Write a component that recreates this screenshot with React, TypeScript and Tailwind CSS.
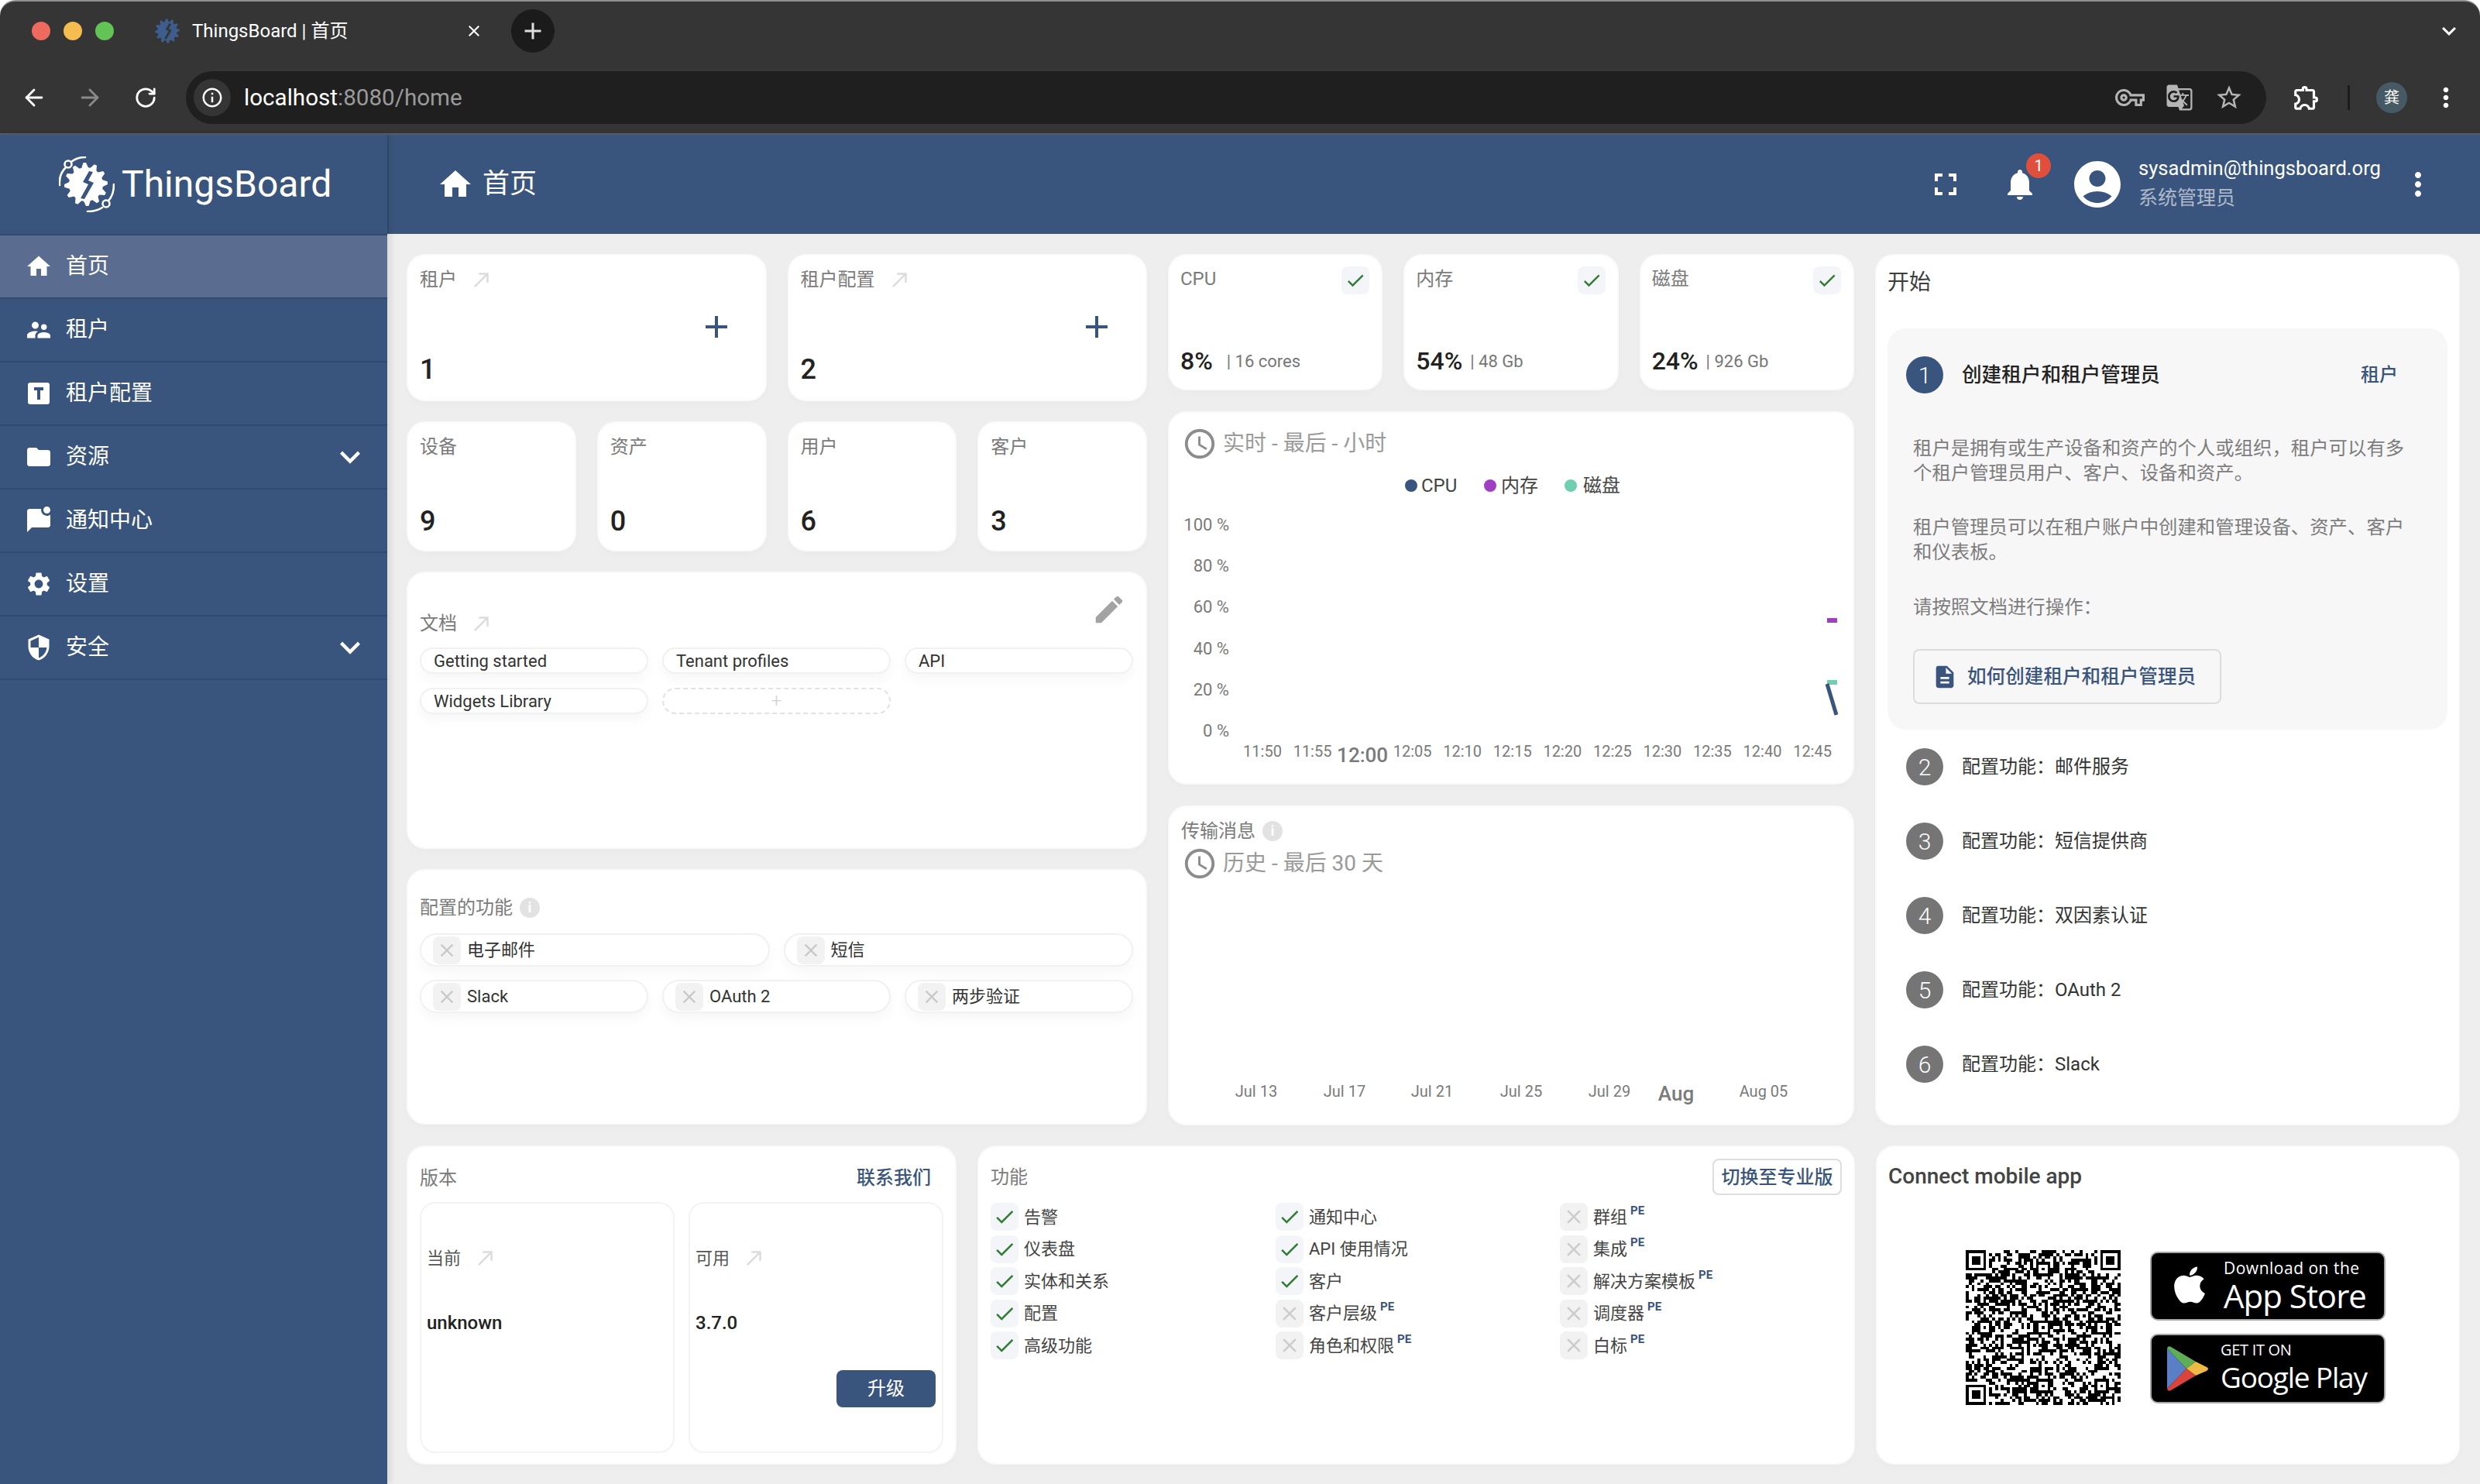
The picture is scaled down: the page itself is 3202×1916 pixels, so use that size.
import React from "react";
import {
  MdHome, MdSupervisorAccount, MdFolder, MdMarkChatUnread, MdSettings, MdSecurity, MdExpandMore,
  MdFullscreen, MdNotifications, MdAccountCircle, MdMoreVert, MdCallMade, MdAdd, MdEdit, MdCheck,
  MdClose, MdDescription, MdAccessTime, MdOutlineVpnKey, MdGTranslate, MdStarBorder,
  MdOutlineExtension, MdKeyboardArrowDown, MdInfoOutline,
} from "react-icons/md";
import { FaApple } from "react-icons/fa";
import { ArrowLeft, ArrowRight, RotateCw } from "lucide-react";

function gearPoints(cx: number, cy: number, r1: number, r2: number, teeth: number) {
  const pts: string[] = [];
  for (let i = 0; i < teeth * 4; i++) {
    const a = (i / (teeth * 4)) * Math.PI * 2 - 0.13;
    const r = i % 4 < 2 ? r1 : r2;
    pts.push(`${(cx + r * Math.cos(a)).toFixed(2)},${(cy + r * Math.sin(a)).toFixed(2)}`);
  }
  return pts.join(" ");
}

function Logo({ size, color, bg, orbit }: { size: number; color: string; bg: string; orbit: boolean }) {
  return (
    <svg width={size} height={size} viewBox={orbit ? "0 0 72 72" : "5 6 60 60"} fill="none">
      <polygon points={gearPoints(35, 36, 28, 22, 12)} fill={color} />
      <path d="M39 19 L31 33 L38 36 L28 54 L33 55 L45 34 L38 31 L44 20 Z" fill={bg} />
      {orbit && (
        <g stroke={color} strokeWidth="2.6" strokeLinecap="round">
          <circle cx="12" cy="10" r="4.5" />
          <path d="M1 37 C0 27 4 19 9 14" />
          <path d="M16 7 C21 3 27 1 34 1" />
          <circle cx="61" cy="61" r="4.5" />
          <path d="M71 36 C71 45 69 52 64 57" />
          <path d="M56 66 C50 70 44 71 37 71" />
        </g>
      )}
    </svg>
  );
}

function QRCode() {
  const n = 53;
  const cells: boolean[][] = [];
  let seed = 20240805;
  const rnd = () => {
    seed = (seed * 1664525 + 1013904223) >>> 0;
    return (seed >>> 16) / 65536;
  };
  for (let y = 0; y < n; y++) {
    const row: boolean[] = [];
    for (let x = 0; x < n; x++) row.push(rnd() > 0.5);
    cells.push(row);
  }
  const stamp = (px: number, py: number) => {
    for (let y = -1; y <= 7; y++)
      for (let x = -1; x <= 7; x++) {
        const X = px + x;
        const Y = py + y;
        if (X < 0 || Y < 0 || X >= n || Y >= n) continue;
        const ring = x === 0 || y === 0 || x === 6 || y === 6;
        const core = x >= 2 && x <= 4 && y >= 2 && y <= 4;
        const inside = x >= 0 && x <= 6 && y >= 0 && y <= 6;
        cells[Y][X] = inside && (ring || core);
      }
  };
  stamp(0, 0);
  stamp(n - 7, 0);
  stamp(0, n - 7);
  const align = (cx: number, cy: number) => {
    for (let y = -2; y <= 2; y++)
      for (let x = -2; x <= 2; x++) cells[cy + y][cx + x] = Math.max(Math.abs(x), Math.abs(y)) !== 1;
  };
  [
    [26, 6], [6, 26], [26, 26], [46, 26], [26, 46], [46, 46],
  ].forEach(([a, b]) => align(a, b));
  let d = "";
  cells.forEach((row, y) =>
    row.forEach((on, x) => {
      if (on) d += `M${x} ${y}h1v1h-1z`;
    })
  );
  return (
    <svg width={200} height={200} viewBox={`0 0 ${n} ${n}`} shapeRendering="crispEdges">
      <path d={d} fill="#000" />
    </svg>
  );
}

function Card({ className, children }: { className: string; children?: React.ReactNode }) {
  return (
    <div className={`bg-white rounded-[24px] border-2 border-[#fafafa] shadow-[0_4px_10px_rgba(0,0,0,0.02)] box-border ${className}`}>
      {children}
    </div>
  );
}

function Label({ text, arrow }: { text: string; arrow?: boolean }) {
  return (
    <div className="flex items-center h-[30px] text-[24px] text-[#7b7b7b] leading-[30px]">
      <span>{text}</span>
      {arrow && <MdCallMade size={30} className="ml-[17px] text-[#dcdcdc]" />}
    </div>
  );
}

function LabelInfo({ text }: { text: string }) {
  return (
    <div className="flex items-center h-[30px] text-[24px] text-[#7b7b7b] leading-[30px]">
      <span>{text}</span>
      <span className="ml-[9px] w-[26px] h-[26px] rounded-full bg-[#e2e2e2] flex items-center justify-center text-white text-[18px] font-bold">i</span>
    </div>
  );
}

function StatBig({ label, value }: { label: string; value: string }) {
  return (
    <Card className="flex-1 h-[190px] pl-[15px] pr-[39px] pt-[16px]">
      <Label text={label} arrow />
      <div className="flex justify-end mt-[28px] h-[36px] text-[#3a557d]">
        <MdAdd size={48} className="-mt-[6px]" />
      </div>
      <div className="mt-[15px] text-[36px] leading-[44px] font-medium text-[#222]">{value}</div>
    </Card>
  );
}

function StatSmall({ label, value }: { label: string; value: string }) {
  return (
    <Card className="flex-1 h-[168px] pl-[15px] pt-[16px] flex flex-col justify-between pb-[15px]">
      <Label text={label} />
      <div className="text-[36px] leading-[44px] font-medium text-[#222]">{value}</div>
    </Card>
  );
}

function Chip({ children }: { children: React.ReactNode }) {
  return (
    <div className="h-[34px] rounded-full border-2 border-[#f1f1f1] bg-white shadow-[0_8px_16px_rgba(0,0,0,0.035)] pl-[16px] flex items-center text-[22px] text-[#333]">
      {children}
    </div>
  );
}

function FeatureChip({ text }: { text: string }) {
  return (
    <div className="h-[43px] rounded-full border-2 border-[#f1f1f1] bg-white shadow-[0_8px_16px_rgba(0,0,0,0.035)] pl-[15px] flex items-center text-[22px] text-[#333]">
      <span className="w-[36px] h-[36px] rounded-[8px] bg-[#f2f2f2] flex items-center justify-center text-[#c9c9c9] mr-[8px]">
        <MdClose size={28} />
      </span>
      {text}
    </div>
  );
}

function Health({ label, value, extra, wide }: { label: string; value: string; extra: string; wide?: boolean }) {
  return (
    <Card className="flex-1 h-[176px] pl-[14px] pr-[15px] pt-[14px] flex flex-col justify-between pb-[14px]">
      <div className="flex justify-between items-start">
        <div className="mt-[1px]"><Label text={label} /></div>
        <span className="w-[36px] h-[36px] rounded-[8px] bg-[#f3f5f9] flex items-center justify-center text-[#2e7d32]">
          <MdCheck size={28} />
        </span>
      </div>
      <div className="flex items-center h-[44px]">
        <span className="text-[32px] font-medium text-[#222]">{value}</span>
        <span className={`${wide ? "ml-[18px]" : "ml-[10px]"} text-[22px] text-[#777]`}>| {extra}</span>
      </div>
    </Card>
  );
}

function TimeTitle({ text }: { text: string }) {
  return (
    <div className="flex items-center h-[40px] pl-[1px] text-[28px] text-[#9a9a9a]">
      <MdAccessTime size={46} className="-ml-[3px] -mr-[3px] text-[#8c8c8c]" />
      <span className="ml-[10px]">{text}</span>
    </div>
  );
}

function RealtimeChart() {
  const ys = [["100 %", 78], ["80 %", 131], ["60 %", 184], ["40 %", 238], ["20 %", 291], ["0 %", 344]] as const;
  const xs = ["11:50", "11:55", "12:00", "12:05", "12:10", "12:15", "12:20", "12:25", "12:30", "12:35", "12:40", "12:45"];
  return (
    <svg width={882} height={412} viewBox="0 0 882 412" className="block">
      <circle cx={312} cy={28} r={8} fill="#3a557d" />
      <text x={325} y={36} fontSize={24} fill="#444">CPU</text>
      <circle cx={414} cy={28} r={8} fill="#a03fc3" />
      <text x={428} y={36} fontSize={24} fill="#444">内存</text>
      <circle cx={518} cy={28} r={8} fill="#6fcfb0" />
      <text x={534} y={36} fontSize={24} fill="#444">磁盘</text>
      {ys.map(([t, y]) => (
        <text key={t} x={77} y={y + 8} fontSize={22} fill="#7a7a7a" textAnchor="end">{t}</text>
      ))}
      {xs.map((t, i) => (
        <text
          key={t}
          x={120 + i * 64.55}
          y={t === "12:00" ? 385 : 378}
          fontSize={t === "12:00" ? 26 : 20}
          fontWeight={t === "12:00" ? 500 : 400}
          fill="#7a7a7a"
          textAnchor="middle"
        >
          {t}
        </text>
      ))}
      <line x1={849} y1={202} x2={862} y2={202} stroke="#a03fc3" strokeWidth={6} />
      <line x1={849} y1={282} x2={862} y2={282} stroke="#6fcfb0" strokeWidth={6} />
      <line x1={849} y1={284} x2={861} y2={324} stroke="#3a557d" strokeWidth={5} />
    </svg>
  );
}

function HistoryChart() {
  const xs: [string, number][] = [["Jul 13", 112], ["Jul 17", 226], ["Jul 21", 339], ["Jul 25", 454], ["Jul 29", 568], ["Aug 05", 767]];
  return (
    <svg width={882} height={300} viewBox="0 0 882 300" className="block">
      {xs.map(([t, x]) => (
        <text key={t} x={x} y={281} fontSize={20} fill="#7a7a7a" textAnchor="middle">{t}</text>
      ))}
      <text x={654} y={286} fontSize={26} fontWeight={500} fill="#7a7a7a" textAnchor="middle">Aug</text>
    </svg>
  );
}

function Feature({ text, on, pe }: { text: string; on?: boolean; pe?: boolean }) {
  return (
    <div className="flex items-center h-[36px] text-[22px] text-[#444]">
      <span className={`w-[36px] h-[36px] rounded-[8px] flex items-center justify-center shrink-0 ${on ? "bg-[#f3f5f9] text-[#2e7d32]" : "bg-[#f2f2f2] text-[#cccccc]"}`}>
        {on ? <MdCheck size={30} /> : <MdClose size={30} />}
      </span>
      <span className="ml-[7px]">{text}</span>
      {pe && <span className="ml-[4px] -mt-[16px] text-[15px] font-bold text-[#3a557d]">PE</span>}
    </div>
  );
}

function Step({ n, text }: { n: number; text: string }) {
  return (
    <div className="flex items-center h-[48px]">
      <span className="w-[48px] h-[48px] rounded-full bg-[#757575] text-white text-[30px] font-light flex items-center justify-center">{n}</span>
      <span className="ml-[24px] text-[24px] text-[#333]">{text}</span>
    </div>
  );
}

function TBox() {
  return (
    <svg width={36} height={36} viewBox="0 0 36 36">
      <path d="M7 4h22a3 3 0 0 1 3 3v22a3 3 0 0 1-3 3H7a3 3 0 0 1-3-3V7a3 3 0 0 1 3-3z M12 10v4h4v12h4V14h4v-4z" fill="#fff" fillRule="evenodd" />
    </svg>
  );
}

function NavItem({ icon, text, active, caret }: { icon: React.ReactNode; text: string; active?: boolean; caret?: boolean }) {
  return (
    <div className={`h-[82px] border-b-2 border-[#33496e] flex items-center text-white text-[28px] ${active ? "bg-[#5a6d90]" : ""}`}>
      <span className="w-[36px] h-[36px] ml-[32px] flex items-center justify-center">{icon}</span>
      <span className="ml-[17px]">{text}</span>
      {caret && <MdExpandMore size={52} className="ml-auto mr-[22px]" />}
    </div>
  );
}

export default function App() {
  return (
    <div className="w-[3202px] h-[1916px] overflow-hidden bg-white font-[Roboto,'Noto_Sans_CJK_SC',sans-serif] flex flex-col">
      {/* browser chrome */}
      <div className="h-[174px] shrink-0 bg-[#353535] rounded-t-[20px] border-t-2 border-t-[#8f8f8f] border-b-2 border-b-[#5c5c5c] box-border text-white">
        <div className="h-[76px] flex items-center pl-[41px]">
          <span className="w-[24px] h-[24px] rounded-full bg-[#ee6a5f]" />
          <span className="w-[24px] h-[24px] rounded-full bg-[#f5bd4f] ml-[17px]" />
          <span className="w-[24px] h-[24px] rounded-full bg-[#61c454] ml-[17px]" />
          <span className="ml-[52px]"><Logo size={34} color="#3e5d8c" bg="#353535" orbit={false} /></span>
          <span className="ml-[15px] text-[24px] w-[354px]">ThingsBoard | 首页</span>
          <MdClose size={24} className="-ml-[2px]" />
          <span className="ml-[36px] w-[56px] h-[56px] rounded-full bg-[#1b1b1b] flex items-center justify-center">
            <MdAdd size={36} className="text-[#dedede]" />
          </span>
          <MdKeyboardArrowDown size={36} className="ml-auto mr-[22px]" />
        </div>
        <div className="h-[94px] pt-[2px] flex items-center">
          <ArrowLeft size={34} strokeWidth={2} className="ml-[27px]" />
          <ArrowRight size={34} strokeWidth={2} className="ml-[38px] text-[#8a8a8a]" />
          <RotateCw size={30} strokeWidth={2.2} className="ml-[40px]" />
          <div className="ml-[37px] w-[2686px] h-[68px] rounded-full bg-[#1f1f1f] flex items-center pl-[10px]">
            <span className="w-[48px] h-[48px] rounded-full bg-[#353535] flex items-center justify-center">
              <MdInfoOutline size={30} />
            </span>
            <span className="ml-[17px] text-[29.6px]">localhost<span className="text-[#9a9a9a]">:8080/home</span></span>
            <MdOutlineVpnKey size={38} className="ml-auto text-[#b5b5b5]" />
            <MdGTranslate size={36} className="ml-[27px] text-[#b5b5b5]" />
            <MdStarBorder size={38} className="ml-[27px] mr-[29px] text-[#b5b5b5]" />
          </div>
          <MdOutlineExtension size={38} className="ml-[33px]" />
          <span className="ml-[34px] w-[3px] h-[32px] bg-[#1c1c1c]" />
          <span className="ml-[34px] w-[40px] h-[40px] rounded-full bg-[#455a64] flex items-center justify-center text-[20px]">龚</span>
          <MdMoreVert size={40} className="ml-[30px]" />
        </div>
      </div>

      <div className="flex-1 flex min-h-0">
        {/* sidebar */}
        <aside className="w-[500px] shrink-0 bg-[#3a557d] shadow-[4px_0_8px_rgba(0,0,0,0.1)] z-10 flex flex-col">
          <div className="h-[130px] border-b-2 border-[#33496e] flex items-center pl-[76px] text-white">
            <Logo size={72} color="#fff" bg="#3a557d" orbit />
            <span className="ml-[9px] text-[48px] leading-none">ThingsBoard</span>
          </div>
          <NavItem active text="首页" icon={<MdHome size={36} className="text-white" />} />
          <NavItem text="租户" icon={<MdSupervisorAccount size={36} className="text-white" />} />
          <NavItem text="租户配置" icon={<TBox />} />
          <NavItem caret text="资源" icon={<MdFolder size={36} className="text-white" />} />
          <NavItem text="通知中心" icon={<MdMarkChatUnread size={36} className="text-white" />} />
          <NavItem text="设置" icon={<MdSettings size={36} className="text-white" />} />
          <NavItem caret text="安全" icon={<MdSecurity size={36} className="text-white" />} />
        </aside>

        <div className="flex-1 flex flex-col min-w-0">
          {/* header */}
          <header className="h-[128px] shrink-0 bg-[#3a557d] border-l-2 border-[#344d73] flex items-center text-white">
            <MdHome size={48} className="ml-[62px]" />
            <span className="ml-[11px] text-[35px]">首页</span>
            <MdFullscreen size={48} className="ml-auto" />
            <span className="relative ml-[48px]">
              <MdNotifications size={48} />
              <span className="absolute -top-[16px] left-[32px] w-[32px] h-[32px] rounded-full bg-[#e04e3c] flex items-center justify-center text-[20px]">1</span>
            </span>
            <MdAccountCircle size={72} className="ml-[40px]" />
            <div className="ml-[17px] w-[312px] flex flex-col">
              <span className="text-[25.6px] leading-[36px] whitespace-nowrap">sysadmin@thingsboard.org</span>
              <span className="text-[25px] leading-[42px] text-white/60">系统管理员</span>
            </div>
            <MdMoreVert size={48} className="ml-[25px] mr-[56px]" />
          </header>

          {/* content */}
          <main className="flex-1 bg-[#eeeeee] pl-[25px] pr-[26px] pt-[26px] flex flex-col gap-[26px]">
            <div className="flex gap-[27px] h-[1125px]">
              {/* left column */}
              <div className="w-[956px] flex flex-col gap-[26px]">
                <div className="flex gap-[27px]">
                  <StatBig label="租户" value="1" />
                  <StatBig label="租户配置" value="2" />
                </div>
                <div className="flex gap-[27px]">
                  <StatSmall label="设备" value="9" />
                  <StatSmall label="资产" value="0" />
                  <StatSmall label="用户" value="6" />
                  <StatSmall label="客户" value="3" />
                </div>
                <Card className="h-[358px] pl-[15px] pr-[16px] pt-[28px]">
                  <div className="flex justify-between items-start h-[50px]">
                    <div className="mt-[22px]"><Label text="文档" arrow /></div>
                    <MdEdit size={46} className="text-[#a3a3a3] mr-[8px] -mt-[4px]" />
                  </div>
                  <div className="mt-[18px] grid grid-cols-3 gap-x-[18px] gap-y-[18px]">
                    <Chip>Getting started</Chip>
                    <Chip>Tenant profiles</Chip>
                    <Chip>API</Chip>
                    <Chip>Widgets Library</Chip>
                    <div className="h-[34px] rounded-full border-2 border-dashed border-[#e2e2e2] flex items-center justify-center text-[#d0d0d0] text-[24px] font-light">+</div>
                  </div>
                </Card>
                <Card className="h-[330px] pl-[15px] pr-[16px] pt-[33px]">
                  <LabelInfo text="配置的功能" />
                  <div className="mt-[18px] grid grid-cols-2 gap-[18px]">
                    <FeatureChip text="电子邮件" />
                    <FeatureChip text="短信" />
                  </div>
                  <div className="mt-[17px] grid grid-cols-3 gap-[18px]">
                    <FeatureChip text="Slack" />
                    <FeatureChip text="OAuth 2" />
                    <FeatureChip text="两步验证" />
                  </div>
                </Card>
              </div>

              {/* middle column */}
              <div className="w-[886px] flex flex-col gap-[27px]">
                <div className="flex gap-[27px]">
                  <Health label="CPU" value="8%" extra="16 cores" wide />
                  <Health label="内存" value="54%" extra="48 Gb" />
                  <Health label="磁盘" value="24%" extra="926 Gb" />
                </div>
                <Card className="h-[482px] pt-[20px] pl-[18px] overflow-hidden">
                  <TimeTitle text="实时 - 最后 - 小时" />
                  <div className="-ml-[18px] mt-[6px]"><RealtimeChart /></div>
                </Card>
                <Card className="h-[413px] pt-[16px] pl-[15px] overflow-hidden">
                  <LabelInfo text="传输消息" />
                  <div className="mt-[7px] ml-[3px]"><TimeTitle text="历史 - 最后 30 天" /></div>
                  <div className="-ml-[15px]"><HistoryChart /></div>
                </Card>
              </div>

              {/* right column */}
              <Card className="flex-1 pl-[14px] pr-[14px] pt-[15px]">
                <div className="text-[28px] leading-[40px] text-[#3d3d3d]">开始</div>
                <div className="mt-[39px] h-[518px] rounded-[24px] bg-[#f7f7f7] pl-[24px] pr-[24px] pt-[36px] box-border">
                  <div className="flex items-center h-[48px]">
                    <span className="w-[48px] h-[48px] rounded-full bg-[#3a557d] text-white text-[30px] font-light flex items-center justify-center">1</span>
                    <span className="ml-[24px] text-[25.6px] font-medium text-[#222]">创建租户和租户管理员</span>
                    <span className="ml-auto mr-[40px] text-[24px] font-medium text-[#3a557d]">租户</span>
                  </div>
                  <div className="ml-[9px] text-[24.4px] leading-[32px] text-[#7d7d7d]">
                    <p className="mt-[55px]">租户是拥有或生产设备和资产的个人或组织，租户可以有多<br />个租户管理员用户、客户、设备和资产。</p>
                    <p className="mt-[38px]">租户管理员可以在租户账户中创建和管理设备、资产、客户<br />和仪表板。</p>
                    <p className="mt-[39px]">请按照文档进行操作：</p>
                    <div className="mt-[38px] w-[398px] h-[71px] rounded-[8px] border-2 border-[#dcdcdc] box-border flex items-center pl-[22px] text-[#3a557d] font-medium">
                      <MdDescription size={34} />
                      <span className="ml-[12px] text-[24.6px] whitespace-nowrap">如何创建租户和租户管理员</span>
                    </div>
                  </div>
                </div>
                <div className="mt-[24px] pl-[24px] flex flex-col gap-[48px]">
                  <Step n={2} text="配置功能：邮件服务" />
                  <Step n={3} text="配置功能：短信提供商" />
                  <Step n={4} text="配置功能：双因素认证" />
                  <Step n={5} text="配置功能：OAuth 2" />
                  <Step n={6} text="配置功能：Slack" />
                </div>
              </Card>
            </div>

            {/* bottom row */}
            <div className="flex gap-[27px] h-[412px]">
              <Card className="w-[710px] pl-[15px] pr-[15px] pt-[22px]">
                <div className="flex justify-between items-center">
                  <Label text="版本" />
                  <span className="text-[24px] font-medium text-[#3a557d] mr-[16px]">联系我们</span>
                </div>
                <div className="mt-[13px] grid grid-cols-2 gap-[18px] h-[324px]">
                  <div className="rounded-[20px] border-2 border-[#f3f3f3] pl-[7px] pt-[55px]">
                    <div className="flex items-center h-[30px] text-[22px] text-[#555]">当前<MdCallMade size={30} className="ml-[17px] text-[#dcdcdc]" /></div>
                    <div className="mt-[54px] text-[24px] leading-[30px] font-medium text-[#222]">unknown</div>
                  </div>
                  <div className="rounded-[20px] border-2 border-[#f3f3f3] pl-[7px] pr-[8px] pt-[55px]">
                    <div className="flex items-center h-[30px] text-[22px] text-[#555]">可用<MdCallMade size={30} className="ml-[17px] text-[#dcdcdc]" /></div>
                    <div className="mt-[54px] text-[24px] leading-[30px] font-medium text-[#222]">3.7.0</div>
                    <div className="flex justify-end mt-[46px]">
                      <span className="w-[128px] h-[48px] rounded-[8px] bg-[#3a557d] text-white text-[24px] flex items-center justify-center">升级</span>
                    </div>
                  </div>
                </div>
              </Card>

              <Card className="w-[1133px] pl-[15px] pr-[15px] pt-[15px]">
                <div className="flex justify-between items-center h-[47px]">
                  <Label text="功能" />
                  <span className="w-[167px] h-[47px] rounded-[8px] border-2 border-[#dedede] box-border flex items-center justify-center text-[24px] font-medium text-[#3a557d] whitespace-nowrap">切换至专业版</span>
                </div>
                <div className="mt-[10px] grid grid-cols-[368px_367px_1fr] gap-y-[5.5px]">
                  <Feature on text="告警" />
                  <Feature on text="通知中心" />
                  <Feature pe text="群组" />
                  <Feature on text="仪表盘" />
                  <Feature on text="API 使用情况" />
                  <Feature pe text="集成" />
                  <Feature on text="实体和关系" />
                  <Feature on text="客户" />
                  <Feature pe text="解决方案模板" />
                  <Feature on text="配置" />
                  <Feature pe text="客户层级" />
                  <Feature pe text="调度器" />
                  <Feature on text="高级功能" />
                  <Feature pe text="角色和权限" />
                  <Feature pe text="白标" />
                </div>
              </Card>

              <Card className="flex-1 pl-[14px] pt-[18px]">
                <div className="text-[28px] leading-[40px] font-medium text-[#444]">Connect mobile app</div>
                <div className="mt-[75px] ml-[100px] flex items-center">
                  <QRCode />
                  <div className="ml-[38px] flex flex-col gap-[17px]">
                    <div className="w-[304px] h-[89px] rounded-[10px] bg-black border-2 border-[#a6a6a6] box-border flex items-center text-white font-['Open_Sans',sans-serif]">
                      <FaApple size={54} className="ml-[22px] -mt-[4px]" />
                      <div className="ml-[17px] flex flex-col -mt-[3px]">
                        <span className="text-[21px] leading-[28px] tracking-[0.5px]">Download on the</span>
                        <span className="text-[42px] leading-[44px] font-medium -tracking-[1px]">App Store</span>
                      </div>
                    </div>
                    <div className="w-[304px] h-[90px] rounded-[10px] bg-black border-2 border-[#a6a6a6] box-border flex items-center text-white font-['Open_Sans',sans-serif]">
                      <svg width={60} height={64} viewBox="19 12 60 64" className="ml-[18px] shrink-0">
                        <path d="M21 18 L21 70 L46 44 Z" fill="#5b7fc7" />
                        <path d="M21 18 Q22 14 26 16 L58 35 L46 44 Z" fill="#5fad56" />
                        <path d="M58 35 L72 42 Q76 44 72 47 L58 53 L46 44 Z" fill="#edbb43" />
                        <path d="M46 44 L58 53 L26 72 Q22 74 21 70 Z" fill="#d9443c" />
                      </svg>
                      <div className="ml-[11px] flex flex-col -mt-[4px]">
                        <span className="text-[20px] leading-[26px] font-medium -tracking-[0.3px]">GET IT ON</span>
                        <span className="text-[37px] leading-[44px] font-medium -tracking-[1.2px] whitespace-nowrap">Google Play</span>
                      </div>
                    </div>
                  </div>
                </div>
              </Card>
            </div>
          </main>
        </div>
      </div>
    </div>
  );
}
